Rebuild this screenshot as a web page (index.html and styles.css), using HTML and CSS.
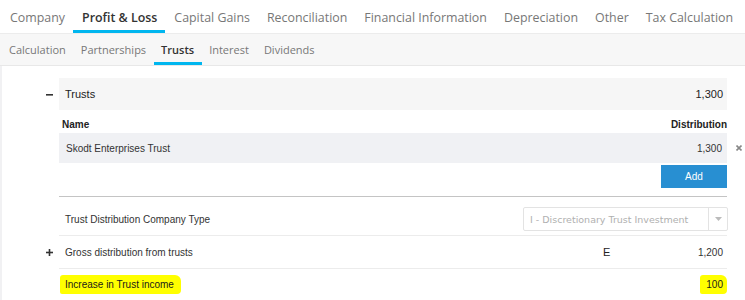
FILE: index.html
```html
<!DOCTYPE html>
<html lang="en">
<head>
    <meta charset="UTF-8">
    <meta name="viewport" content="width=device-width, initial-scale=1.0">
    <title>Profit &amp; Loss - Trusts</title>
    <link rel="stylesheet" href="styles.css">
</head>
<body>

    <nav class="main-tabs">
        <a href="#">Company</a>
        <a href="#" class="active">Profit &amp; Loss</a>
        <a href="#">Capital Gains</a>
        <a href="#">Reconciliation</a>
        <a href="#">Financial Information</a>
        <a href="#">Depreciation</a>
        <a href="#">Other</a>
        <a href="#">Tax Calculation</a>
    </nav>

    <nav class="sub-tabs">
        <a href="#">Calculation</a>
        <a href="#">Partnerships</a>
        <a href="#" class="active">Trusts</a>
        <a href="#">Interest</a>
        <a href="#">Dividends</a>
    </nav>

    <div class="panel">
        <!-- Trusts group -->
        <div class="line">
            <span class="toggle">
                <svg width="7" height="7" viewBox="0 0 7 7"><rect x="0" y="3" width="7" height="1.6" fill="#333"/></svg>
            </span>
            <div class="cell group-head">
                <span>Trusts</span>
                <span class="num">1,300</span>
            </div>
        </div>

        <div class="line">
            <span></span>
            <div class="cell col-head">
                <span>Name</span>
                <span>Distribution</span>
            </div>
        </div>

        <div class="line">
            <span></span>
            <div class="cell trust-row">
                <span>Skodt Enterprises Trust</span>
                <span class="num">1,300</span>
            </div>
            <button class="remove" title="Remove">
                <svg width="6" height="6" viewBox="0 0 6 6"><path d="M0.5 0.5 L5.5 5.5 M5.5 0.5 L0.5 5.5" stroke="#888" stroke-width="1.6"/></svg>
            </button>
        </div>

        <div class="line">
            <span></span>
            <div class="cell add-row">
                <button class="add-button">Add</button>
            </div>
        </div>

        <div class="line">
            <span></span>
            <div class="cell field-row">
                <span>Trust Distribution Company Type</span>
                <div class="select">
                    <span class="select-text">I - Discretionary Trust Investment</span>
                    <span class="select-arrow">
                        <svg width="7" height="4" viewBox="0 0 7 4"><path d="M0 0 L7 0 L3.5 4 Z" fill="#bbb"/></svg>
                    </span>
                </div>
            </div>
        </div>

        <div class="line">
            <span class="toggle">
                <svg width="7" height="7" viewBox="0 0 7 7"><rect x="0" y="2.7" width="7" height="1.6" fill="#333"/><rect x="2.7" y="0" width="1.6" height="7" fill="#333"/></svg>
            </span>
            <div class="cell value-row">
                <span>Gross distribution from trusts</span>
                <span class="code">E</span>
                <span class="num">1,200</span>
            </div>
        </div>

        <div class="line">
            <span></span>
            <div class="cell total-row">
                <span class="marker marker-label">Increase in Trust income</span>
                <span class="marker marker-num">100</span>
            </div>
        </div>
    </div>

</body>
</html>
```

FILE: styles.css
```css
body {
    margin: 0;
    font-family: "Liberation Sans", Arial, sans-serif;
    font-size: 10px;
    color: #333;
    background: #fff;
    height: 300px;
    overflow: hidden;
}

.main-tabs {
    display: flex;
    height: 33px;
    padding-left: 1px;
    border-bottom: 1px solid #ececec;
    font-family: "Open Sans", sans-serif;
    font-size: 12.4px;
    white-space: nowrap;
}

    .main-tabs a {
        display: flex;
        flex-shrink: 0;
        align-items: center;
        padding: 5px 8px 0 9px;
        color: #777;
        text-decoration: none;
        border-bottom: 3px solid transparent;
    }

        .main-tabs a.active {
            color: #333;
            font-weight: 600;
            border-bottom-color: #00b6ef;
        }

.sub-tabs {
    display: flex;
    height: 31px;
    padding-left: 2px;
    background: #f7f7f7;
    border-bottom: 1px solid #e8e8e8;
    font-family: "Open Sans", sans-serif;
    font-size: 11px;
    white-space: nowrap;
}

    .sub-tabs a {
        display: flex;
        align-items: center;
        padding: 3px 8px 0 7px;
        color: #777;
        text-decoration: none;
        border-bottom: 3px solid transparent;
    }

        .sub-tabs a.active {
            color: #333;
            font-weight: 600;
            border-bottom-color: #00b6ef;
        }

.panel {
    box-sizing: border-box;
    height: 234px;
    overflow: hidden;
    border-left: 2px solid #f1f1f3;
    padding-top: 12px;
}

.line {
    display: grid;
    grid-template-columns: 57px 668px 18px;
    align-items: center;
}

.toggle {
    display: flex;
    justify-content: flex-end;
    padding-right: 6px;
}

.cell {
    display: flex;
    align-items: center;
    justify-content: space-between;
}

.num {
    text-align: right;
}

.group-head {
    height: 32px;
    padding: 0 4px 0 6px;
    background: #f6f6f6;
    font-size: 11px;
    color: #222;
}

.col-head {
    height: 23px;
    padding: 5px 0 0 3px;
    box-sizing: border-box;
    font-weight: bold;
    color: #222;
}

.trust-row {
    height: 30px;
    padding: 0 5px 0 7px;
    background: #f0f1f4;
}

.remove {
    display: flex;
    border: none;
    background: none;
    padding: 0 0 0 9px;
    cursor: pointer;
}

.add-row {
    justify-content: flex-end;
    padding: 2px 0 8px;
    border-bottom: 1px solid #c4c4c4;
}

.add-button {
    width: 66px;
    height: 23px;
    border: none;
    background: #288fd2;
    color: #fff;
    font-family: "Liberation Sans", Arial, sans-serif;
    font-size: 10px;
    cursor: pointer;
}

.field-row {
    height: 39px;
    box-sizing: border-box;
    padding: 6px 0 0 6px;
    border-bottom: 1px solid #ececec;
}

.select {
    display: flex;
    width: 203px;
    height: 22px;
    margin-right: -1px;
    border: 1px solid #e3e3e3;
    border-radius: 2px;
}

.select-text {
    flex: 1;
    display: flex;
    align-items: center;
    padding-left: 6px;
    font-family: "DejaVu Sans", Verdana, sans-serif;
    font-size: 9.5px;
    color: #b0b0b0;
}

.select-arrow {
    display: flex;
    align-items: center;
    justify-content: center;
    width: 18px;
    border-left: 1px solid #e3e3e3;
}

.value-row {
    display: grid;
    grid-template-columns: 1fr 20px 100px;
    height: 32px;
    padding: 0 4px 0 6px;
    border-bottom: 1px solid #ececec;
}

.code {
    font-size: 11px;
    color: #222;
}

.total-row {
    height: 30px;
    padding: 0 0 0 1px;
}

.marker {
    background: #ffff00;
    color: #1a1a1a;
    height: 19px;
    display: flex;
    align-items: center;
    border-radius: 3px 6px 4px 2px;
}

.marker-label {
    padding: 0 7px 0 5px;
}

.marker-num {
    padding: 0 4px 0 6px;
}
```
